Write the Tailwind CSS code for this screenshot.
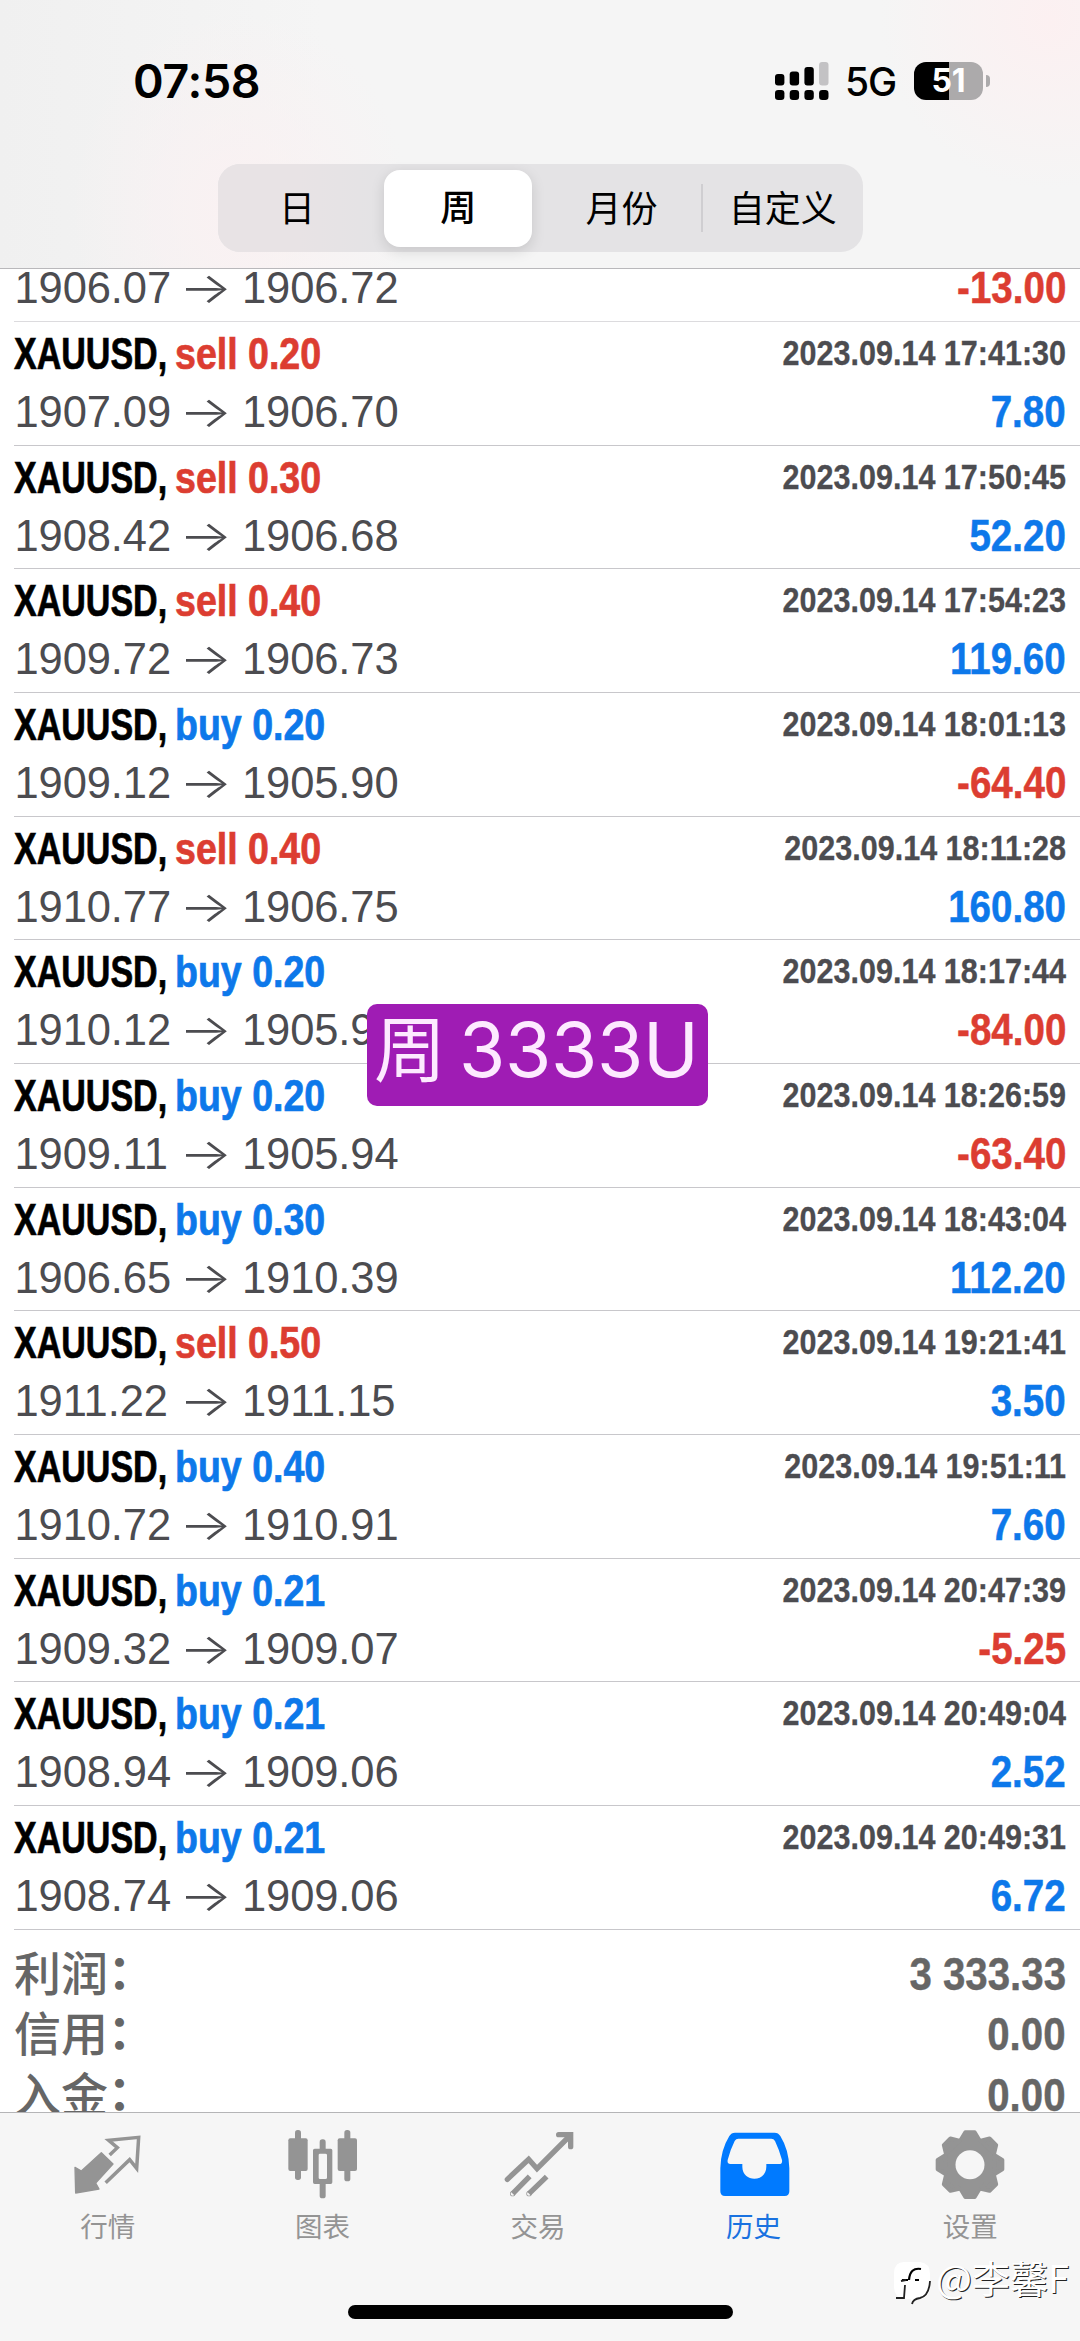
<!DOCTYPE html>
<html lang="zh-CN">
<head>
<meta charset="utf-8">
<title>历史</title>
<script src="https://cdn.jsdelivr.net/npm/@tailwindcss/browser@4"></script>
</head>
<body class="bg-white">
<div class="relative flex h-[2341px] w-[1080px] flex-col overflow-hidden bg-white font-['Liberation_Sans','Noto_Sans_CJK_SC',sans-serif]">

  <header class="flex h-[269px] shrink-0 flex-col border-b border-[#b9b8bb] bg-[#f5f4f5] bg-[radial-gradient(ellipse_170px_200px_at_240px_210px,#faf1f2,transparent),radial-gradient(ellipse_170px_170px_at_1050px_20px,#fcf0f1,transparent),linear-gradient(90deg,#f0f0f0,#f5f5f5_30%,#f5f5f5)]">
    <div class="flex h-[164px] items-start justify-between pt-[52px] pr-[90px] pl-[133px]">
      <div class="font-['Inter',sans-serif] text-[46.5px] leading-[58px] font-semibold tracking-[-0.3px] text-black">07:58</div>
      <div class="flex items-center pt-[9px]">
        <svg class="h-[38px] w-[54px]" viewBox="0 0 54 38">
          <g fill="#000"><rect x="0" y="12" width="9.4" height="11.5" rx="3"/><rect x="14.7" y="9.5" width="9.4" height="14" rx="3"/><rect x="29.4" y="5" width="9.4" height="18.5" rx="3"/>
          <rect x="0" y="28" width="9.4" height="10" rx="3.2"/><rect x="14.7" y="28" width="9.4" height="10" rx="3.2"/><rect x="29.4" y="28" width="9.4" height="10" rx="3.2"/><rect x="44.1" y="28" width="9.4" height="10" rx="3.2"/></g>
          <rect x="44.1" y="0" width="9.4" height="23.5" rx="3" fill="#c3c2c4"/>
        </svg>
        <div class="ml-[16px] w-[53px] pt-[2px] font-['Inter',sans-serif] text-[39px] leading-[38px] font-medium tracking-[-1px] text-black">5G</div>
        <div class="ml-[16px] flex h-[38px] w-[69px] items-center justify-center rounded-[12px] bg-[linear-gradient(90deg,#000_51%,#acaaab_51%)] font-['Inter',sans-serif] text-[32px] font-bold text-white">51</div>
        <div class="ml-[3px] h-[12px] w-[4px] rounded-r-full bg-[#acaaab]"></div>
      </div>
    </div>
    <div class="mx-auto flex h-[88px] w-[645px] items-center rounded-[22px] bg-[#e4e3e5] text-[36px] text-black">
      <div class="flex h-full flex-1 items-center justify-center rounded-l-[22px] bg-[linear-gradient(90deg,#e8e3e5_50%,#e4e3e5)] pt-[3px] pr-[2px]">日</div>
      <div class="flex h-full flex-1 items-center justify-center"><div class="flex h-[77px] w-[148px] items-center justify-center rounded-[16px] bg-white pt-[2px] font-medium shadow-[0_4px_14px_rgba(0,0,0,0.13)]">周</div></div>
      <div class="flex h-full flex-1 items-center justify-center pt-[3px] pl-[4px]">月份</div>
      <div class="h-[48px] w-[2px] bg-[#cfced1]"></div>
      <div class="flex h-full flex-1 items-center justify-center pt-[3px]">自定义</div>
    </div>
  </header>

  <main id="list" class="flex h-[1843px] shrink-0 flex-col overflow-hidden"></main>

  <nav class="flex h-[229px] shrink-0 border-t border-[#b5b5b7] bg-[#f6f6f6] pr-[2px] text-[27.5px] leading-[28px] text-[#949494]">
    <div class="flex flex-1 flex-col items-center pt-[15px]">
      <svg class="h-[72px] w-[80px]" viewBox="203 84 240 216"><path d="M303 158 L338 192 L286 249 L296 267 L226 279 L224 202 L243 213 Z" fill="#949494" stroke="#949494" stroke-width="4" stroke-linejoin="round"/><path d="M328 165 L351 143 L325 121 L415 112 L409 205 L388 179 L316 248" fill="none" stroke="#949494" stroke-width="10.5"/></svg>
      <div class="mt-[14px]">行情</div>
    </div>
    <div class="flex flex-1 flex-col items-center pt-[15px]">
      <svg class="h-[72px] w-[80px]" viewBox="850 84 240 216" fill="#949494"><rect x="886" y="90" width="18" height="150" rx="8"/><rect x="866" y="115" width="58" height="98" rx="6"/><rect x="1034" y="90" width="18" height="154" rx="8"/><rect x="1014" y="115" width="58" height="98" rx="6"/><rect x="960" y="118" width="18" height="40" rx="8"/><rect x="960" y="240" width="18" height="55" rx="8"/><path fill-rule="evenodd" d="M945 146H993Q998 146 998 151V247Q998 252 993 252H945Q940 252 940 247V151Q940 146 945 146ZM961 161Q957 161 957 165V233Q957 237 961 237H977Q982 237 982 233V165Q982 161 977 161Z"/></svg>
      <div class="mt-[14px] pr-[2px]">图表</div>
    </div>
    <div class="flex flex-1 flex-col items-center pt-[15px]">
      <svg class="h-[72px] w-[80px]" viewBox="357 84 240 216" fill="none" stroke="#949494" stroke-width="16"><path d="M382 238L446 178L471 206L569 108" stroke-linecap="round"/><path d="M536 104H572V140" stroke-linecap="round"/><path d="M449 229L398 281M500 230L447 281"/><circle cx="398" cy="281" r="1" stroke-width="14"/><circle cx="447" cy="281" r="1" stroke-width="14"/></svg>
      <div class="mt-[14px] pr-[2px]">交易</div>
    </div>
    <div class="flex flex-1 flex-col items-center pt-[15px] text-[#1a72e0]">
      <svg class="h-[72px] w-[80px]" viewBox="1004 84 240 216"><path fill="#007aff" fill-rule="evenodd" d="M1064 98H1183Q1194 98 1200 108Q1226 150 1227 205V274Q1227 288 1213 288H1034Q1020 288 1020 274V205Q1021 150 1047 108Q1053 98 1064 98ZM1074 116Q1067 116 1063 123Q1049 151 1042 180Q1040 192 1050 192H1086V200C1086 248 1158 248 1158 200V192H1196Q1207 192 1205 180Q1197 150 1184 123Q1180 116 1173 116Z"/></svg>
      <div class="mt-[14px] pr-[2px]">历史</div>
    </div>
    <div class="flex flex-1 flex-col items-center pt-[15px]">
      <svg class="h-[72px] w-[80px]" viewBox="451 84 240 216"><defs><path id="tooth" d="M-14 -97H14L28 -74H-28Z" stroke="#949494" stroke-width="12" stroke-linejoin="round"/></defs><g transform="translate(571 194)" fill="#949494"><circle r="80"/><use href="#tooth"/><use href="#tooth" transform="rotate(45)"/><use href="#tooth" transform="rotate(90)"/><use href="#tooth" transform="rotate(135)"/><use href="#tooth" transform="rotate(180)"/><use href="#tooth" transform="rotate(225)"/><use href="#tooth" transform="rotate(270)"/><use href="#tooth" transform="rotate(315)"/><circle r="43.5" fill="#f6f6f6"/></g></svg>
      <div class="mt-[14px]">设置</div>
    </div>
  </nav>

  <!-- home indicator -->
  <div class="absolute top-[2305px] left-[348px] h-[14px] w-[385px] rounded-full bg-black"></div>

  <!-- caption sticker -->
  <div class="absolute top-[1004px] left-[367px] flex h-[102px] w-[341px] items-start rounded-[10px] bg-[#9f1cb4] pl-[7px] text-[#fdeaff]">
    <span class="mt-[1px] text-[72px] leading-[92px]">周</span>
    <span class="ml-[13px] font-['Inter',sans-serif] text-[75px] leading-[92px] font-normal tracking-[-0.3px]">3333U</span>
  </div>

  <!-- author watermark -->
  <div class="absolute top-[2259px] left-[893px] flex items-start text-white">
    <svg class="mt-[2px] h-[44px] w-[39px]" viewBox="0 0 39 44"><path d="M11 1H27Q37 2 37 13V27Q36 37 27 38L19 42L18 38H11Q2 37 1 27V11Q2 1 11 1Z" fill="#fff"/><path d="M28 8Q17 6 16 19M9 19H15M22 19H26" fill="none" stroke="#000" stroke-width="2.2"/><path d="M8 20L13 19M12 24L11 37L3 37M19 43Q20 38 27 37Q36 35 37 20" fill="none" stroke="#222" stroke-width="1.8"/></svg>
    <div class="ml-[4px] font-['Noto_Sans_CJK_SC',sans-serif] text-[38px] leading-[36px] font-normal [text-shadow:1px_1px_0_#222]">@李馨F</div>
  </div>
</div>

<script>
const trades = [
  ['sell 0.20','2023.09.14 17:41:30','1907.09','1906.70','7.80'],
  ['sell 0.30','2023.09.14 17:50:45','1908.42','1906.68','52.20'],
  ['sell 0.40','2023.09.14 17:54:23','1909.72','1906.73','119.60'],
  ['buy 0.20','2023.09.14 18:01:13','1909.12','1905.90','-64.40'],
  ['sell 0.40','2023.09.14 18:11:28','1910.77','1906.75','160.80'],
  ['buy 0.20','2023.09.14 18:17:44','1910.12','1905.92','-84.00'],
  ['buy 0.20','2023.09.14 18:26:59','1909.11','1905.94','-63.40'],
  ['buy 0.30','2023.09.14 18:43:04','1906.65','1910.39','112.20'],
  ['sell 0.50','2023.09.14 19:21:41','1911.22','1911.15','3.50'],
  ['buy 0.40','2023.09.14 19:51:11','1910.72','1910.91','7.60'],
  ['buy 0.21','2023.09.14 20:47:39','1909.32','1909.07','-5.25'],
  ['buy 0.21','2023.09.14 20:49:04','1908.94','1909.06','2.52'],
  ['buy 0.21','2023.09.14 20:49:31','1908.74','1909.06','6.72'],
];
const red = 'text-[#dc3d31]', blue = 'text-[#0d78ea]';
const prices = (a, b, p) => `
  <div class="flex items-start justify-between text-[43.5px] leading-[57px] text-[#4c4c50]">
    <div class="flex"><span class="w-[165px] pl-[0.5px] tracking-[-0.1px]">${a}</span><span class="w-[63px]"><span class="inline-block origin-left scale-x-[1.3] font-['Inter',sans-serif] text-[43px] leading-[52px] font-light">→</span></span><span class="tracking-[-0.1px]">${b}</span></div>
    <span class="inline-block origin-right scale-x-[0.886] font-bold [-webkit-text-stroke:0.5px_currentColor] ${p[0] === '-' ? red : blue}">${p}</span>
  </div>`;
const row = ([t, d, a, b, p]) => `
  <div class="ml-[14px] h-[123.66px] shrink-0 border-b border-[#c8c7cb] pt-[2px] pr-[14px]">
    <div class="flex h-[60px] items-start justify-between font-bold">
      <div class="flex text-[43.5px] leading-[60px] [-webkit-text-stroke:0.7px_currentColor]"><span class="w-[161px]"><span class="inline-block origin-left scale-x-[0.782] text-black">XAUUSD,</span></span><span class="inline-block origin-left scale-x-[0.863] ${t[0] === 's' ? red : blue}">${t}</span></div>
      <span class="inline-block origin-right scale-x-[0.872] text-[35px] leading-[58px] text-[#4c4c50] [-webkit-text-stroke:0.3px_currentColor]">${d}</span>
    </div>${prices(a, b, p)}
  </div>`;
const total = (l, v) => `
  <div class="flex h-[60.5px] shrink-0 items-start justify-between pr-[14px] pl-[14px] leading-[60px] font-bold text-[#666]">
    <span class="-mt-[3px] font-['Noto_Sans_CJK_SC',sans-serif] text-[47px] font-medium">${l}<span lang="ja" class="-ml-[12px] font-['Noto_Sans_CJK_JP',sans-serif] font-bold">：</span></span><span class="inline-block origin-right scale-x-[0.875] text-[46px] [-webkit-text-stroke:0.4px_currentColor]">${v}</span>
  </div>`;
document.getElementById('list').innerHTML =
  `<div class="ml-[14px] h-[53px] shrink-0 border-b border-[#dcdbde] pr-[14px]"><div class="-mt-[9px]">${prices('1906.07', '1906.72', '-13.00')}</div></div>` +
  trades.map(row).join('') + '<div class="h-[14px] shrink-0"></div>' +
  total('利润', '3 333.33') + total('信用', '0.00') + total('入金', '0.00');
</script>
</body>
</html>
